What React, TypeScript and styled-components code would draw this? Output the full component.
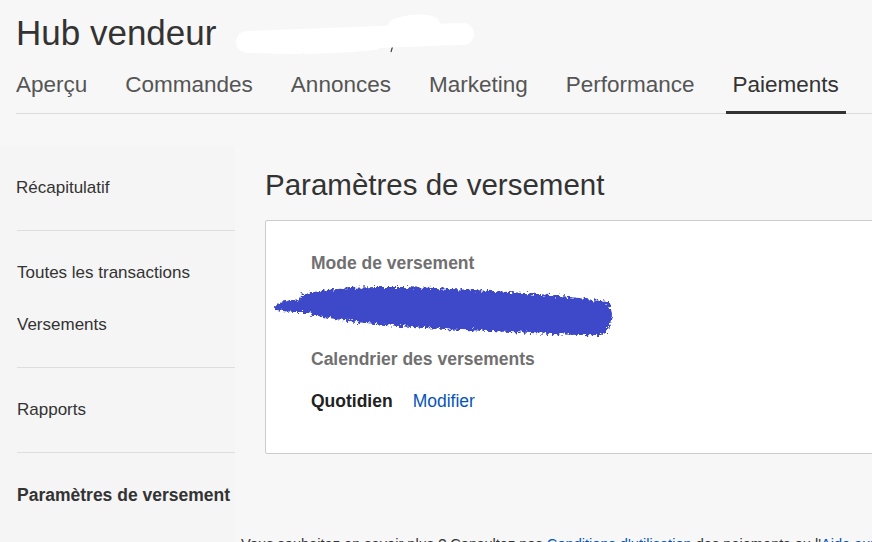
import React from 'react'
import styled, { createGlobalStyle } from 'styled-components'

const GlobalStyle = createGlobalStyle`
  html, body {
    margin: 0;
    padding: 0;
    background: #f7f7f7;
    overflow: hidden;
  }
  body {
    font-family: 'Liberation Sans', Arial, sans-serif;
    color: #333;
  }
`

const Page = styled.div`
  width: 940px;
  height: 542px;
  overflow: hidden;
`

const Header = styled.header`
  padding: 12px 0 0 16px;
`

const TitleRow = styled.div`
  display: flex;
  align-items: flex-start;
  height: 42px;
`

const Title = styled.h1`
  margin: 0;
  font-size: 35px;
  line-height: 42px;
  font-weight: 400;
  color: #333;
`

const Redaction = styled.svg`
  margin-left: 19px;
  flex-shrink: 0;
`

const Tabs = styled.nav`
  display: flex;
  gap: 24px;
  margin-top: 18px;
  border-bottom: 1px solid #ddd;
`

const Tab = styled.a<{ $active?: boolean }>`
  padding: 0 7px 13px;
  margin-bottom: -1px;
  font-size: 22.5px;
  line-height: 26px;
  color: ${(p) => (p.$active ? '#333' : '#555')};
  border-bottom: 3px solid ${(p) => (p.$active ? '#333' : 'transparent')};
  text-decoration: none;
  white-space: nowrap;
  &:first-child {
    padding-left: 0;
  }
`

const Body = styled.div`
  display: flex;
  gap: 30px;
  margin-top: 32px;
`

const Sidebar = styled.aside`
  width: 219px;
  padding-left: 16px;
  background: #f5f5f5;
  flex-shrink: 0;
`

const Group = styled.div`
  padding: 16px 0;
  & + & {
    border-top: 1px solid #dedede;
    margin-left: 1px;
  }
`

const NavItem = styled.div<{ $current?: boolean }>`
  padding: 16px 0;
  font-size: ${(p) => (p.$current ? '17.5px' : '17px')};
  line-height: 20px;
  font-weight: ${(p) => (p.$current ? 700 : 400)};
  color: #333;
  white-space: nowrap;
`

const Main = styled.main`
  flex: 1;
  min-width: 0;
`

const Heading = styled.h2`
  margin: 22px 0 0;
  font-size: 29.5px;
  line-height: 34px;
  font-weight: 400;
  color: #333;
`

const Card = styled.section`
  margin-top: 18px;
  background: #fff;
  border: 1px solid #ccc;
  border-radius: 2px;
  padding: 32px 0 42px 45px;
`

const Label = styled.div`
  font-size: 17.5px;
  line-height: 20px;
  font-weight: 700;
  color: #707070;
`

const MaskedValue = styled.div`
  height: 76px;
  margin-left: -39px;
  display: flex;
  align-items: center;
`

const ScheduleRow = styled.div`
  display: flex;
  align-items: baseline;
  gap: 20px;
  margin-top: 22px;
`

const Value = styled.span`
  font-size: 17.5px;
  line-height: 20px;
  font-weight: 700;
  color: #222;
`

const Link = styled.a`
  font-size: 17.5px;
  line-height: 20px;
  color: #0654ba;
  text-decoration: none;
`

const Footnote = styled.p`
  margin: 80px 0 0 -24px;
  font-size: 14.6px;
  line-height: 20px;
  color: #333;
  white-space: nowrap;
`

const FootLink = styled.a`
  color: #0654ba;
  text-decoration: none;
`

const tabs = ['Aperçu', 'Commandes', 'Annonces', 'Marketing', 'Performance', 'Paiements']

const groups: string[][] = [
  ['Récapitulatif'],
  ['Toutes les transactions', 'Versements'],
  ['Rapports'],
  ['Paramètres de versement'],
]

const WhiteOut = () => (
  <Redaction width="240" height="42" viewBox="0 0 240 42">
    <path d="M68 37 l1 5" stroke="#444" strokeWidth="1" />
    <path d="M158 33 l-2 7" stroke="#444" strokeWidth="1.2" />
    <g stroke="#fff" strokeLinecap="round" fill="none">
      <path d="M12 30 C60 28 120 26 170 24 S220 22 228 22" strokeWidth="22" />
      <path d="M20 34 C60 36 100 35 140 31" strokeWidth="14" />
      <path d="M160 14 C172 9 190 8 198 12" strokeWidth="14" />
    </g>
  </Redaction>
)

const BlueScribble = () => (
  <svg width="346" height="60" viewBox="0 0 346 60">
    <defs>
      <filter id="rough" x="-5%" y="-20%" width="110%" height="140%">
        <feTurbulence type="fractalNoise" baseFrequency="0.35" numOctaves="2" seed="4" result="noise" />
        <feDisplacementMap in="SourceGraphic" in2="noise" scale="8" xChannelSelector="R" yChannelSelector="G" />
        <feGaussianBlur stdDeviation="0.7" />
      </filter>
    </defs>
    <g filter="url(#rough)" fill="#3c48c8">
      <path d="M3 24 C10 19 30 17 48 18 L52 30 C35 32 14 31 4 29 Z" />
      <path d="M28 14 C60 6 110 4 180 8 C240 11 300 14 338 22 L340 34 C338 44 336 52 330 54 C300 55 250 51 190 49 C130 46 80 42 40 34 C30 30 26 22 28 14 Z" />
    </g>
  </svg>
)

export default function App() {
  return (
    <Page>
      <GlobalStyle />
      <Header>
        <TitleRow>
          <Title>Hub vendeur</Title>
          <WhiteOut />
        </TitleRow>
        <Tabs>
          {tabs.map((t) => (
            <Tab key={t} $active={t === 'Paiements'}>
              {t}
            </Tab>
          ))}
        </Tabs>
      </Header>
      <Body>
        <Sidebar>
          {groups.map((g, i) => (
            <Group key={i}>
              {g.map((item) => (
                <NavItem key={item} $current={item === 'Paramètres de versement'}>
                  {item}
                </NavItem>
              ))}
            </Group>
          ))}
        </Sidebar>
        <Main>
          <Heading>Paramètres de versement</Heading>
          <Card>
            <Label>Mode de versement</Label>
            <MaskedValue>
              <BlueScribble />
            </MaskedValue>
            <Label>Calendrier des versements</Label>
            <ScheduleRow>
              <Value>Quotidien</Value>
              <Link href="#">Modifier</Link>
            </ScheduleRow>
          </Card>
          <Footnote>
            Vous souhaitez en savoir plus ? Consultez nos{' '}
            <FootLink href="#">Conditions d'utilisation</FootLink> des paiements ou l'
            <FootLink href="#">Aide aux vendeurs</FootLink>.
          </Footnote>
        </Main>
      </Body>
    </Page>
  )
}
